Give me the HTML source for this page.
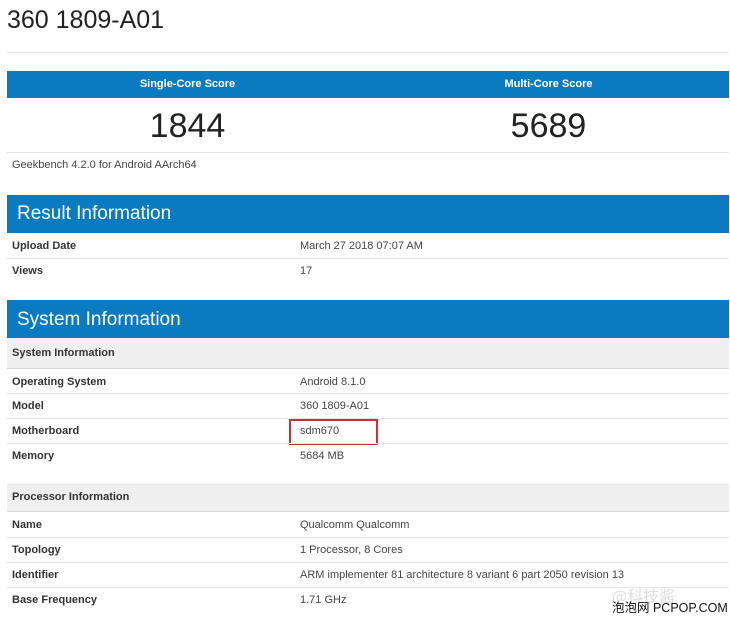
<!DOCTYPE html>
<html><head><meta charset="utf-8"><style>
body{margin:0;width:730px;height:617px;background:#fff;font-family:"Liberation Sans",Arial,sans-serif;position:relative;overflow:hidden;color:#333}
.a{position:absolute}
.blue{background:#0b7bc1;left:7px;width:722px}
.lbl{font-weight:bold;font-size:11px;color:#333;left:12px}
.val{font-size:11px;color:#444;left:300px}
.ln{left:7px;width:722px;height:1px;background:#e4e4e4}
.gray{background:#efefef;left:7px;width:722px}
.h{color:#fff;font-size:19px;left:17px}
</style></head><body>
<div class="a" style="left:7px;top:6px;font-size:25px;color:#222">360 1809-A01</div>
<div class="a ln" style="top:52px"></div>
<div class="a blue" style="top:71px;height:27px"></div>
<div class="a" style="left:7px;width:361px;top:78px;text-align:center;color:#fff;font-weight:bold;font-size:11px">Single-Core Score</div>
<div class="a" style="left:368px;width:361px;top:78px;text-align:center;color:#fff;font-weight:bold;font-size:11px">Multi-Core Score</div>
<div class="a" style="left:7px;width:361px;top:107px;text-align:center;font-size:34px;color:#222">1844</div>
<div class="a" style="left:368px;width:361px;top:107px;text-align:center;font-size:34px;color:#222">5689</div>
<div class="a ln" style="top:152px"></div>
<div class="a" style="left:12px;top:159px;font-size:11px;color:#444">Geekbench 4.2.0 for Android AArch64</div>
<div class="a blue" style="top:195px;height:38px"></div>
<div class="a h" style="top:203px">Result Information</div>
<div class="a lbl" style="top:240px">Upload Date</div><div class="a val" style="top:240px">March 27 2018 07:07 AM</div>
<div class="a ln" style="top:258px"></div>
<div class="a lbl" style="top:265px">Views</div><div class="a val" style="top:265px">17</div>
<div class="a blue" style="top:300px;height:38px"></div>
<div class="a h" style="top:309px">System Information</div>
<div class="a gray" style="top:338px;height:30px"></div>
<div class="a lbl" style="top:347px">System Information</div>
<div class="a ln" style="top:368px;background:#d8d8d8"></div>
<div class="a lbl" style="top:376px">Operating System</div><div class="a val" style="top:376px">Android 8.1.0</div>
<div class="a ln" style="top:393px"></div>
<div class="a lbl" style="top:400px">Model</div><div class="a val" style="top:400px">360 1809-A01</div>
<div class="a ln" style="top:418px"></div>
<div class="a lbl" style="top:425px">Motherboard</div><div class="a val" style="top:425px">sdm670</div>
<div class="a" style="left:289px;top:419px;width:85px;height:22px;border:2px solid #c8313a"></div>
<div class="a ln" style="top:443px"></div>
<div class="a lbl" style="top:450px">Memory</div><div class="a val" style="top:450px">5684 MB</div>
<div class="a gray" style="top:483px;height:29px"></div>
<div class="a lbl" style="top:491px">Processor Information</div>
<div class="a ln" style="top:511px;background:#d8d8d8"></div>
<div class="a lbl" style="top:519px">Name</div><div class="a val" style="top:519px">Qualcomm Qualcomm</div>
<div class="a ln" style="top:537px"></div>
<div class="a lbl" style="top:544px">Topology</div><div class="a val" style="top:544px">1 Processor, 8 Cores</div>
<div class="a ln" style="top:562px"></div>
<div class="a lbl" style="top:569px">Identifier</div><div class="a val" style="top:569px">ARM implementer 81 architecture 8 variant 6 part 2050 revision 13</div>
<div class="a ln" style="top:587px"></div>
<div class="a lbl" style="top:594px">Base Frequency</div><div class="a val" style="top:594px">1.71 GHz</div>
<div class="a" style="left:612px;top:583px;font-size:16px;color:#ddd;font-family:'Noto Sans CJK SC',sans-serif">@科技酱</div>
<div class="a" style="left:612px;top:597px;font-size:12.5px;color:#111;font-family:'Liberation Sans','Noto Sans CJK SC',sans-serif">泡泡网 PCPOP.COM</div>
</body></html>
